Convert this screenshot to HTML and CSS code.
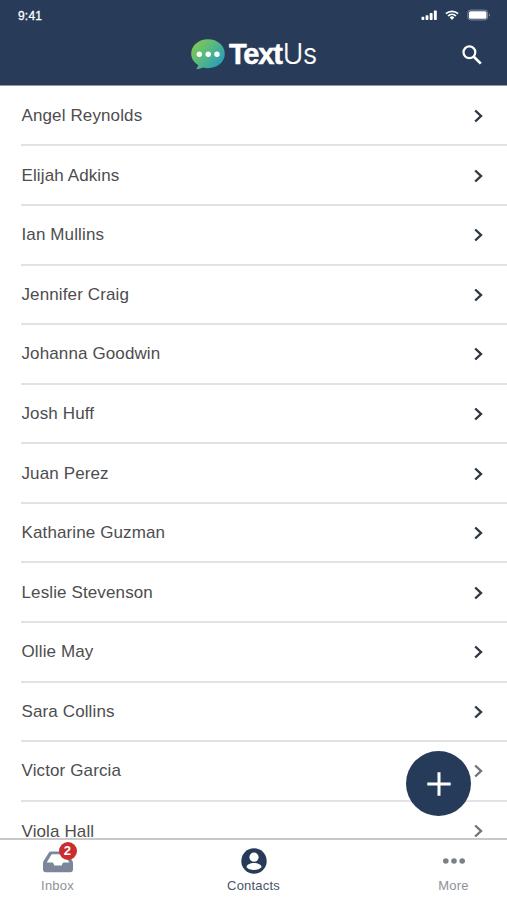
FILE: index.html
```
<!DOCTYPE html>
<html lang="en">
<head>
<meta charset="utf-8">
<title>TextUs Contacts</title>
<link rel="stylesheet" href="styles.css">
</head>
<body>
<div class="app">
  <header class="header">
    <div class="status">
      <span class="time">9:41</span>
      <svg class="status-icons" width="72" height="14" viewBox="0 0 72 14">
        <g fill="#fff">
          <rect x="1.5" y="8.8" width="2.8" height="3.2" rx=".7"/>
          <rect x="5.6" y="7.3" width="2.8" height="4.7" rx=".7"/>
          <rect x="9.7" y="5" width="2.9" height="7" rx=".7"/>
          <rect x="13.900" y="2.6" width="2.900" height="9.4" rx=".7"/>
          <path d="M29.6 9.3a3.7 3.7 0 0 1 4.8 0L32 11.9z"/>
          <rect x="49" y="3.2" width="17.5" height="7.6" rx="1.6"/>
        </g>
        <path d="M25.9 5.7a9 9 0 0 1 12.2 0M28 8a5.9 5.9 0 0 1 8 0" fill="none" stroke="#fff" stroke-width="1.7"/>
        <rect x="47.9" y="2.1" width="19.7" height="9.8" rx="2.8" fill="none" stroke="#8996a8" stroke-width=".9"/>
        <path d="M69 5.5q2 1.5 0 3z" fill="#8996a8"/>
      </svg>
    </div>
    <div class="brand-bar">
      <div class="brand">
        <svg class="bubble" width="34" height="31" viewBox="0 0 34 31">
          <defs>
            <linearGradient id="bubble-fill" x1="0" y1="0" x2="1" y2=".75">
              <stop offset="0" stop-color="#8dcb48"/>
              <stop offset=".4" stop-color="#62bd73"/>
              <stop offset="1" stop-color="#269dbc"/>
            </linearGradient>
          </defs>
          <path d="M17 .3C26.5.3 33.8 6.500 33.800 14.800S26.500 29.200 17 29.200q-2.700 0-5.200-.7-2.700 1.800-6.700 1.800 1.900-1.800 2.100-4.200C2.800 23.400.2 19.500.2 14.800.2 6.500 7.500.3 17 .3z" fill="url(#bubble-fill)"/>
          <g fill="#fff"><circle cx="8.300" cy="15.300" r="2.700"/><circle cx="17.200" cy="15.300" r="2.700"/><circle cx="26" cy="15.300" r="2.700"/></g>
        </svg>
        <span class="wordmark"><b>Text</b><span class="light">Us</span></span>
      </div>
      <svg class="search" width="20" height="20" viewBox="0 0 20 20">
        <circle cx="7.400" cy="7.300" r="5.900" fill="none" stroke="#fff" stroke-width="2.200"/>
        <path d="M11.800 11.700l7 6.900" stroke="#fff" stroke-width="2.700"/>
      </svg>
    </div>
  </header>
  <main class="list">
    <div class="row"><span>Angel Reynolds</span><svg class="chevron" viewBox="0 0 9 14"><path d="M1.200 1.500L7 7l-5.800 5.500"/></svg></div>
    <div class="row"><span>Elijah Adkins</span><svg class="chevron" viewBox="0 0 9 14"><path d="M1.200 1.500L7 7l-5.800 5.500"/></svg></div>
    <div class="row"><span>Ian Mullins</span><svg class="chevron" viewBox="0 0 9 14"><path d="M1.200 1.500L7 7l-5.800 5.500"/></svg></div>
    <div class="row"><span>Jennifer Craig</span><svg class="chevron" viewBox="0 0 9 14"><path d="M1.200 1.500L7 7l-5.800 5.500"/></svg></div>
    <div class="row"><span>Johanna Goodwin</span><svg class="chevron" viewBox="0 0 9 14"><path d="M1.200 1.500L7 7l-5.800 5.500"/></svg></div>
    <div class="row"><span>Josh Huff</span><svg class="chevron" viewBox="0 0 9 14"><path d="M1.200 1.500L7 7l-5.800 5.500"/></svg></div>
    <div class="row"><span>Juan Perez</span><svg class="chevron" viewBox="0 0 9 14"><path d="M1.200 1.500L7 7l-5.800 5.500"/></svg></div>
    <div class="row"><span>Katharine Guzman</span><svg class="chevron" viewBox="0 0 9 14"><path d="M1.200 1.500L7 7l-5.800 5.500"/></svg></div>
    <div class="row"><span>Leslie Stevenson</span><svg class="chevron" viewBox="0 0 9 14"><path d="M1.200 1.500L7 7l-5.800 5.500"/></svg></div>
    <div class="row"><span>Ollie May</span><svg class="chevron" viewBox="0 0 9 14"><path d="M1.200 1.500L7 7l-5.800 5.500"/></svg></div>
    <div class="row"><span>Sara Collins</span><svg class="chevron" viewBox="0 0 9 14"><path d="M1.200 1.500L7 7l-5.800 5.500"/></svg></div>
    <div class="row"><span>Victor Garcia</span><svg class="chevron muted" viewBox="0 0 9 14"><path d="M1.200 1.500L7 7l-5.800 5.500"/></svg></div>
    <div class="row last"><span>Viola Hall</span><svg class="chevron muted" viewBox="0 0 9 14"><path d="M1.200 1.500L7 7l-5.800 5.500"/></svg></div>
  </main>
  <nav class="tabs">
    <div class="tab">
      <div class="icon inbox">
        <svg width="32" height="22" viewBox="0 0 32 22">
          <path fill-rule="evenodd" fill="#7b869b" d="M9 .6h14q1.600 0 2.400 1.300l5 8q.6 1 .6 2.200v6.700q0 2.400-2.400 2.400H3.400Q1 21.200 1 18.800v-6.700q0-1.200.6-2.200l5-8Q7.400.6 9 .6zM9.700 3.300L4.700 11.500h5.600q.9 0 1.200.9l.5 1.300q.3.900 1.200.9h5.600q.9 0 1.200-.9l.5-1.300q.3-.9 1.200-.9h5.600l-5-8.200z"/>
        </svg>
        <span class="badge">2</span>
      </div>
      <span>Inbox</span>
    </div>
    <div class="tab active">
      <div class="icon">
        <svg width="26" height="26" viewBox="0 0 26 26">
          <circle cx="13" cy="13" r="12.700" fill="#273b58"/>
          <circle cx="13" cy="9.200" r="4.600" fill="#fff"/>
          <path d="M5.500 19.200c0-2.500 3.500-4.200 7.500-4.200s7.500 1.700 7.500 4.200c-1.400 1.600-4.300 2.700-7.500 2.700s-6.100-1.100-7.500-2.700z" fill="#fff"/>
        </svg>
      </div>
      <span>Contacts</span>
    </div>
    <div class="tab">
      <div class="icon">
        <svg width="24" height="8" viewBox="0 0 24 8"><g fill="#7b8086"><circle cx="3.800" cy="4" r="2.800"/><circle cx="12" cy="4" r="2.800"/><circle cx="20.200" cy="4" r="2.800"/></g></svg>
      </div>
      <span>More</span>
    </div>
  </nav>
  <div class="fab">
    <svg width="24" height="24" viewBox="0 0 24 24"><path d="M12 .3v23.400M.3 12h23.400" stroke="#fff" stroke-width="3"/></svg>
  </div>
</div>
</body>
</html>
```
FILE: styles.css
```
* { box-sizing: border-box; }
body { margin: 0; font-family: "Liberation Sans", Arial, sans-serif; background: #fff; }
svg { display: block; flex: none; }
.app { position: relative; height: 900px; display: flex; flex-direction: column; overflow: hidden; }
.header { flex: none; height: 86px; background: #283c5a; border-bottom: 1px solid #9299a6; color: #fff; }
.status { display: flex; justify-content: space-between; align-items: center; height: 30px; padding: 2px 15px 0 18px; }
.status-icons { margin-top: -2px; }
.time { font-size: 12px; letter-spacing: .2px; -webkit-text-stroke: .3px #fff; }
.brand-bar { display: flex; justify-content: space-between; align-items: center; height: 48px; padding: 0 25px 0 191px; }
.search { margin-top: 1px; }
.brand { display: flex; align-items: center; gap: 5px; }
.wordmark { display: flex; align-items: baseline; font-size: 29px; line-height: 34px; letter-spacing: -1.200px; margin-left: -1px; -webkit-text-stroke: .5px #fff; }
.light { font-family: Inter, sans-serif; font-weight: 300; font-size: 28px; letter-spacing: -.6px; margin-left: 1px; -webkit-text-stroke: .2px #fff; }
.list { flex: 1; min-height: 0; overflow: hidden; padding: 0 0 0 21px; }
.row { display: flex; align-items: center; justify-content: space-between; height: 59.580px; padding: 1px 24px 0 0; border-bottom: 2px solid #e2e2e4; color: #4d4d4f; font-size: 17px; letter-spacing: .12px; }
.row:first-child { height: 60.400px; padding-top: 2px; }
.row span { margin-left: .5px; line-height: 20px; }
.row.last { height: 37px; padding-top: 20px; align-items: flex-start; border: 0; }
.row.last .chevron { margin-top: 2px; }
.chevron { width: 9px; height: 14px; fill: none; stroke: #303744; stroke-width: 2.400; }
.muted { stroke: #737477; }
.tabs { flex: none; display: flex; justify-content: space-between; height: 62px; padding: 0 4px 0 8px; border-top: 2px solid #c8c8ca; background: #fff; }
.tab { width: 99px; display: flex; flex-direction: column; align-items: center; color: #8d9299; font-size: 13px; line-height: 16px; letter-spacing: .2px; }
.active { color: #485469; margin-left: -4px; }
.icon { position: relative; display: flex; align-items: center; height: 38px; padding-top: 3px; }
.inbox { padding-top: 5px; }
.badge { position: absolute; right: -3px; top: 2px; width: 18px; height: 18px; border-radius: 50%; background: #cb2c30; color: #fff; font-size: 13px; line-height: 18px; font-weight: bold; text-align: center; }
.fab { position: absolute; left: 406px; top: 751px; width: 65px; height: 65px; border-radius: 50%; background: #263b59; display: flex; align-items: center; justify-content: center; }
```
